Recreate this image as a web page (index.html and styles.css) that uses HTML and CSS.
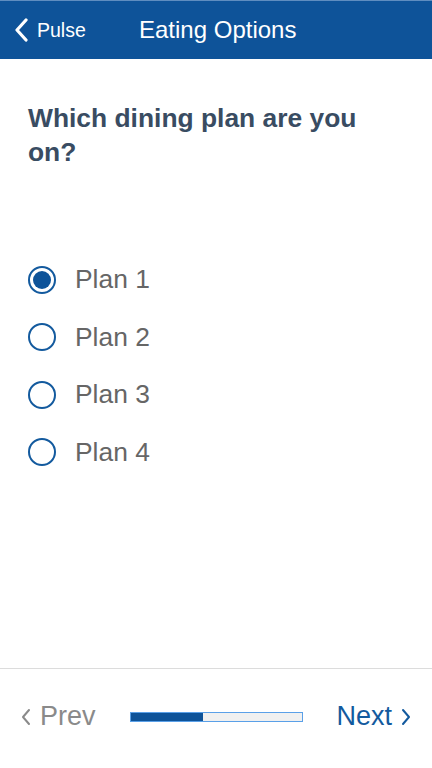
FILE: index.html
```html
<!DOCTYPE html>
<html lang="en">
<head>
    <meta charset="UTF-8">
    <meta name="viewport" content="width=device-width, initial-scale=1.0">
    <title>Eating Options</title>
    <link rel="stylesheet" href="styles.css">
</head>
<body>
    <div class="app">
        <header class="topbar">
            <a class="back" href="#">
                <svg class="back-icon" width="14" height="24" viewBox="0 0 14 24">
                    <path d="M12 2 L3 12 L12 22" fill="none" stroke="#fff" stroke-width="3.2" stroke-linecap="round" stroke-linejoin="round"/>
                </svg>
                <span>Pulse</span>
            </a>
            <h1 class="title">Eating Options</h1>
        </header>

        <main class="content">
            <h2 class="question">Which dining plan are you on?</h2>

            <div class="options">
                <label class="option">
                    <input type="radio" name="plan" value="1" checked>
                    <span class="radio"></span>
                    <span class="option-label">Plan 1</span>
                </label>
                <label class="option">
                    <input type="radio" name="plan" value="2">
                    <span class="radio"></span>
                    <span class="option-label">Plan 2</span>
                </label>
                <label class="option">
                    <input type="radio" name="plan" value="3">
                    <span class="radio"></span>
                    <span class="option-label">Plan 3</span>
                </label>
                <label class="option">
                    <input type="radio" name="plan" value="4">
                    <span class="radio"></span>
                    <span class="option-label">Plan 4</span>
                </label>
            </div>
        </main>

        <footer class="pager">
            <a class="prev" href="#">
                <svg width="12" height="20" viewBox="0 0 12 20">
                    <path d="M9 3 L3 10 L9 17" fill="none" stroke="#8a8a8a" stroke-width="2" stroke-linecap="round" stroke-linejoin="round"/>
                </svg>
                <span>Prev</span>
            </a>
            <div class="progress">
                <div class="progress-fill" style="width: 42%;"></div>
            </div>
            <a class="next" href="#">
                <span>Next</span>
                <svg width="12" height="20" viewBox="0 0 12 20">
                    <path d="M3 3 L9 10 L3 17" fill="none" stroke="#135a9e" stroke-width="2" stroke-linecap="round" stroke-linejoin="round"/>
                </svg>
            </a>
        </footer>
    </div>
</body>
</html>
```

FILE: styles.css
```css
body {
    margin: 0;
    font-family: "Liberation Sans", Arial, sans-serif;
    background-color: #fff;
}

.app {
    display: flex;
    flex-direction: column;
    height: 768px;
}

.topbar {
    height: 59px;
    background-color: #0e5399;
    border-top: 1px solid #5f8dc0;
    box-sizing: border-box;
    display: flex;
    align-items: center;
    padding-left: 14px;
}

.back {
    display: flex;
    align-items: center;
    color: #fff;
    text-decoration: none;
    font-size: 19.5px;
    width: 125px;
}

.back-icon {
    margin-right: 9px;
}

.title {
    margin: 0;
    color: #fff;
    font-size: 24px;
    font-weight: normal;
}

.content {
    flex: 1;
    padding: 0 28px;
}

.question {
    margin: 42px 0 0 0;
    font-size: 26.4px;
    line-height: 34px;
    color: #394c62;
    width: 350px;
}

.options {
    margin-top: 82px;
    display: flex;
    flex-direction: column;
}

.option {
    display: flex;
    align-items: center;
    height: 57.5px;
    cursor: pointer;
}

.option input {
    display: none;
}

.radio {
    width: 24px;
    height: 24px;
    border: 2px solid #135a9e;
    border-radius: 50%;
    box-sizing: content-box;
    position: relative;
    margin-right: 19px;
}

.option input:checked + .radio::after {
    content: "";
    position: absolute;
    top: 3px;
    left: 3px;
    width: 18px;
    height: 18px;
    border-radius: 50%;
    background-color: #0e5399;
}

.option-label {
    font-size: 26.4px;
    color: #666;
}

.pager {
    height: 96px;
    margin-bottom: 4px;
    border-top: 1px solid #dcdcdc;
    display: flex;
    align-items: center;
    padding: 0 20px 0 20px;
    box-sizing: border-box;
}

.prev,
.next {
    display: flex;
    align-items: center;
    text-decoration: none;
    font-size: 27px;
}

.prev {
    color: #8a8a8a;
    width: 110px;
}

.prev svg {
    margin-right: 8px;
}

.next {
    color: #135a9e;
    margin-left: auto;
}

.next svg {
    margin-left: 8px;
}

.progress {
    width: 173px;
    height: 10px;
    border: 1px solid #5aa0e8;
    background-color: #f0f0f0;
    box-sizing: border-box;
}

.progress-fill {
    height: 100%;
    background-color: #0e5399;
}
```
